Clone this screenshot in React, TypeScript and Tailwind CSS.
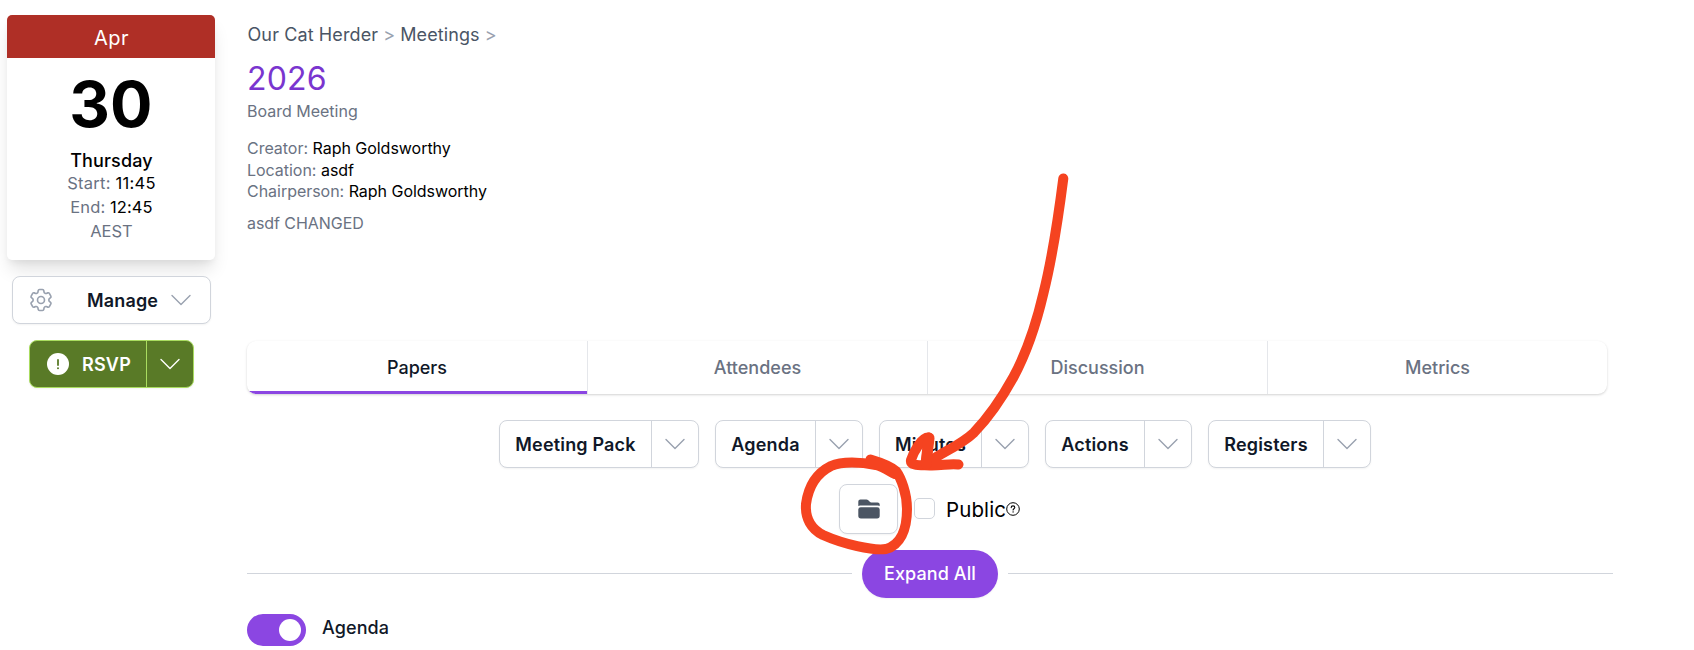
import type { ReactNode } from 'react'

type SplitAction = {
  label: string
  width: string
}

const TABS = ['Papers', 'Attendees', 'Discussion', 'Metrics']

const ACTIONS: SplitAction[] = [
  { label: 'Meeting Pack', width: 'w-[200px]' },
  { label: 'Agenda', width: 'w-[148px]' },
  { label: 'Minutes', width: 'w-[150px]' },
  { label: 'Actions', width: 'w-[147px]' },
  { label: 'Registers', width: 'w-[163px]' },
]

function Chevron({ className }: { className: string }) {
  return (
    <svg viewBox="0 0 20 12" className={`h-3 w-5 shrink-0 ${className}`} fill="none" aria-hidden="true">
      <path d="M1 1.5 10 10.5 19 1.5" stroke="currentColor" strokeWidth="1.4" strokeLinecap="round" strokeLinejoin="round" />
    </svg>
  )
}

function GearIcon() {
  return (
    <svg viewBox="0 0 24 24" className="h-7 w-7 shrink-0 text-gray-400" fill="none" stroke="currentColor" strokeWidth="1.4" strokeLinecap="round" strokeLinejoin="round" aria-hidden="true">
      <path d="M9.594 3.94c.09-.542.56-.94 1.11-.94h2.593c.55 0 1.02.398 1.11.94l.213 1.281c.063.374.313.686.645.87.074.04.147.083.22.127.325.196.72.257 1.075.124l1.217-.456a1.125 1.125 0 0 1 1.37.49l1.296 2.247a1.125 1.125 0 0 1-.26 1.431l-1.003.827c-.293.241-.438.613-.43.992a7.723 7.723 0 0 1 0 .255c-.008.378.137.75.43.991l1.004.827c.424.35.534.955.26 1.43l-1.298 2.247a1.125 1.125 0 0 1-1.369.491l-1.217-.456c-.355-.133-.75-.072-1.076.124a6.47 6.47 0 0 1-.22.128c-.331.183-.581.495-.644.869l-.213 1.281c-.09.543-.56.94-1.11.94h-2.594c-.55 0-1.019-.398-1.11-.94l-.213-1.281c-.062-.374-.312-.686-.644-.87a6.52 6.52 0 0 1-.22-.127c-.325-.196-.72-.257-1.076-.124l-1.217.456a1.125 1.125 0 0 1-1.369-.49l-1.297-2.247a1.125 1.125 0 0 1 .26-1.431l1.004-.827c.292-.24.437-.613.43-.991a6.932 6.932 0 0 1 0-.255c.007-.38-.138-.751-.43-.992l-1.004-.827a1.125 1.125 0 0 1-.26-1.43l1.297-2.247a1.125 1.125 0 0 1 1.37-.491l1.216.456c.356.133.751.072 1.076-.124.072-.044.146-.086.22-.128.332-.183.582-.495.644-.869l.214-1.28Z" />
      <path d="M15 12a3 3 0 1 1-6 0 3 3 0 0 1 6 0Z" />
    </svg>
  )
}

function AlertIcon() {
  return (
    <svg viewBox="0 0 22 22" className="h-[22px] w-[22px] shrink-0" aria-hidden="true">
      <circle cx="11" cy="11" r="11" fill="#fff" />
      <path d="M11 7v5" stroke="#597a27" strokeWidth="1.8" strokeLinecap="round" />
      <circle cx="11" cy="15.2" r="1" fill="#597a27" />
    </svg>
  )
}

function FolderIcon() {
  return (
    <svg viewBox="0 0 22 20" className="h-5 w-[22px]" fill="#4b5563" aria-hidden="true">
      <path d="M.3 6.900V2.600A2.100 2.100 0 0 1 2.400.5h6.100c.6 0 1.100.2 1.500.6l1.800 1.700c.4.400 1 .6 1.500.6h6.300A2.100 2.100 0 0 1 21.700 5.500v1.400a4 4 0 0 0-2.200-.4h-17a4 4 0 0 0-2.200.4Z" />
      <path d="M2.700 8.300h16.600a2.400 2.400 0 0 1 2.400 2.400v6.100a2.600 2.600 0 0 1-2.600 2.600H2.900a2.600 2.600 0 0 1-2.600-2.600v-6.100a2.400 2.400 0 0 1 2.400-2.400Z" />
    </svg>
  )
}

function HelpIcon() {
  return (
    <svg viewBox="0 0 14 14" className="h-3.5 w-3.5 shrink-0" fill="none" stroke="#000" aria-hidden="true">
      <circle cx="7" cy="7" r="6.3" strokeWidth="1" />
      <path d="M5.200 5.600c0-1 .8-1.700 1.800-1.700s1.800.6 1.800 1.600c0 1.200-1.700 1.200-1.700 2.400" strokeWidth="1.1" strokeLinecap="round" />
      <circle cx="7.1" cy="9.9" r=".7" fill="#000" stroke="none" />
    </svg>
  )
}

function Detail({ label, children, className = '' }: { label: string; children: ReactNode; className?: string }) {
  return (
    <p className={className}>
      <span className="text-gray-500">{label}:</span> <span className="text-black">{children}</span>
    </p>
  )
}

function DateCard() {
  return (
    <div className="h-[245px] w-[208px] overflow-hidden rounded-[5px] bg-white text-center shadow-[0_12px_18px_-3px_rgba(0,0,0,0.12),0_4px_7px_-2px_rgba(0,0,0,0.06)]">
      <div className="h-[43px] bg-[#af2f26] pl-px text-[20px] leading-[46px] tracking-[0.5px] text-white">Apr</div>
      <div className="mt-4 text-[63px] leading-[60px] font-bold tracking-[0.3px] text-black">30</div>
      <div className="mt-4 pl-px text-[18px] leading-[22px] font-medium tracking-[0.15px] text-black">Thursday</div>
      <div className="-mt-px pl-px text-[16.5px] leading-6">
        <Detail label="Start" className="tracking-[0.25px]">11:45</Detail>
        <Detail label="End" className="tracking-[0.1px]">12:45</Detail>
        <div className="text-gray-500">AEST</div>
      </div>
    </div>
  )
}

function Sidebar() {
  return (
    <aside className="w-[240px] shrink-0 pt-[15px] pl-[7px]">
      <DateCard />
      <button type="button" className="mt-4 ml-[5px] flex h-12 w-[199px] items-center rounded-lg border border-gray-300 bg-white pl-3.5 shadow-xs">
        <GearIcon />
        <span className="ml-8 w-[72px] text-left text-[18px] font-semibold tracking-[0.15px] text-gray-900">Manage</span>
        <Chevron className="ml-3 text-gray-400" />
      </button>
      <div className="mt-4 ml-[22px] flex h-12 w-[165px] overflow-hidden rounded-lg border border-[#a9dc5f] bg-[#597a27] text-white shadow-xs">
        <button type="button" className="flex w-[117px] items-center border-r border-[#a9dc5f] pl-[17px]">
          <AlertIcon />
          <span className="ml-[13px] text-[18px] font-semibold tracking-[0.2px]">RSVP</span>
        </button>
        <button type="button" aria-label="RSVP options" className="flex flex-1 items-center justify-center">
          <Chevron className="text-white" />
        </button>
      </div>
    </aside>
  )
}

function MeetingHeader() {
  return (
    <header className="h-[319px] pt-px">
      <nav className="flex pl-[0.5px] text-[18px] leading-6 tracking-[0.11px] text-gray-600">
        <span>Our Cat Herder</span>
        <span className="mx-[5px] text-gray-400">&gt;</span>
        <span>Meetings</span>
        <span className="mx-[5px] text-gray-400">&gt;</span>
      </nav>
      <h1 className="mt-[13px] text-[32px] leading-[38px] tracking-[0.2px] text-[#7a35cf]">2026</h1>
      <p className="mt-px text-[16px] leading-6 text-gray-500">Board Meeting</p>
      <div className="mt-[15px] text-[16px] leading-[21.5px] tracking-[-0.03px]">
        <Detail label="Creator">Raph Goldsworthy</Detail>
        <Detail label="Location">asdf</Detail>
        <Detail label="Chairperson">Raph Goldsworthy</Detail>
      </div>
      <p className="mt-2 text-[16px] leading-6 tracking-[-0.06px] text-gray-500">asdf CHANGED</p>
    </header>
  )
}

function Tabs() {
  return (
    <nav className="flex h-[53px] w-[1360px] overflow-hidden rounded-[9px] bg-white shadow-[0_1px_3px_rgba(0,0,0,0.12),0_1px_2px_rgba(0,0,0,0.06)]">
      {TABS.map((tab, index) => (
        <a
          key={tab}
          className={`flex w-[340px] items-center justify-center text-[18px] font-medium ${
            index === 0
              ? 'text-gray-900 shadow-[inset_0_-3px_0_#8b46e2]'
              : 'border-l border-gray-200 text-gray-500'
          }`}
        >
          {tab}
        </a>
      ))}
    </nav>
  )
}

function SplitButton({ action }: { action: SplitAction }) {
  return (
    <div className={`flex h-12 rounded-lg border border-gray-300 bg-white shadow-xs ${action.width}`}>
      <button type="button" className="flex-1 border-r border-gray-300 text-[18px] font-semibold tracking-[0.17px] text-gray-900">
        {action.label}
      </button>
      <button type="button" aria-label={`${action.label} options`} className="flex w-[46px] items-center justify-center">
        <Chevron className="text-gray-400" />
      </button>
    </div>
  )
}

function Toolbar() {
  return (
    <div className="mt-[26px]">
      <div className="flex justify-center gap-4 pl-[10px]">
        {ACTIONS.map((action) => (
          <SplitButton key={action.label} action={action} />
        ))}
      </div>
      <div className="mt-4 flex h-[50px] items-center pl-[592px]">
        <button type="button" aria-label="Files" className="flex h-[50px] w-[59px] items-center justify-center rounded-lg border border-gray-300 bg-white shadow-xs">
          <FolderIcon />
        </button>
        <span className="-mt-px ml-4 h-[21px] w-[21px] rounded-[5px] border border-gray-300 bg-white" />
        <span className="mt-0.5 ml-[11px] text-[20.5px] tracking-[0.1px] text-black">Public</span>
        <HelpIcon />
      </div>
    </div>
  )
}

function ExpandDivider() {
  return (
    <div className="mt-4 flex items-center gap-[10px]">
      <span className="-mt-px h-px flex-1 bg-gray-300" />
      <button type="button" className="h-12 w-[136px] rounded-full bg-[#8b46e2] pb-px text-[18px] font-medium tracking-[0.1px] text-white shadow-xs">
        Expand All
      </button>
      <span className="-mt-px h-px flex-1 bg-gray-300" />
    </div>
  )
}

function AgendaToggle() {
  return (
    <div className="mt-4 flex items-start">
      <span role="switch" aria-checked="true" className="flex h-8 w-[59px] items-center justify-end rounded-full bg-[#8b46e2] pr-[5px]">
        <span className="h-[22px] w-[22px] rounded-full bg-white" />
      </span>
      <span className="ml-4 text-[18px] leading-7 font-medium tracking-[0.1px] text-gray-900">Agenda</span>
    </div>
  )
}

function Annotation() {
  return (
    <svg viewBox="0 0 1694 650" className="pointer-events-none absolute inset-0 h-[650px] w-[1694px]" fill="none" stroke="#f54320" strokeWidth="10" strokeLinecap="round" strokeLinejoin="round" aria-hidden="true">
      <path d="M1063.3 178.500C1058 220 1053 255 1043.5 293C1036 325 1027 352 1013.5 377C1003 396 990 416 974 432.500C964 442 950 449 938 456L926 464L928.5 437.500C922 437 914 451 911 460C910 466 920 465 930 465.500C941 466 950 463 958.500 464.500" />
      <path d="M926 464 929 438" strokeWidth="11" />
      <path d="M870.5 459.500C879 462 890 466 896 471C901 478 907 493 907 509C907 530 900 545 886 549C873 551 843 544 823 535C811 529 805 518 806 504C808 489 815 474 831 466C842 461 861 462 876 465C883 467 889 471 895 474" />
    </svg>
  )
}

export default function App() {
  return (
    <div className="relative flex h-[650px] w-[1694px] overflow-hidden bg-white font-['Inter',sans-serif]">
      <Sidebar />
      <main className="ml-[7px] w-[1366px] pt-[15px]">
        <div className="pt-[7px]">
          <MeetingHeader />
        </div>
        <Tabs />
        <Toolbar />
        <ExpandDivider />
        <AgendaToggle />
      </main>
      <Annotation />
    </div>
  )
}
